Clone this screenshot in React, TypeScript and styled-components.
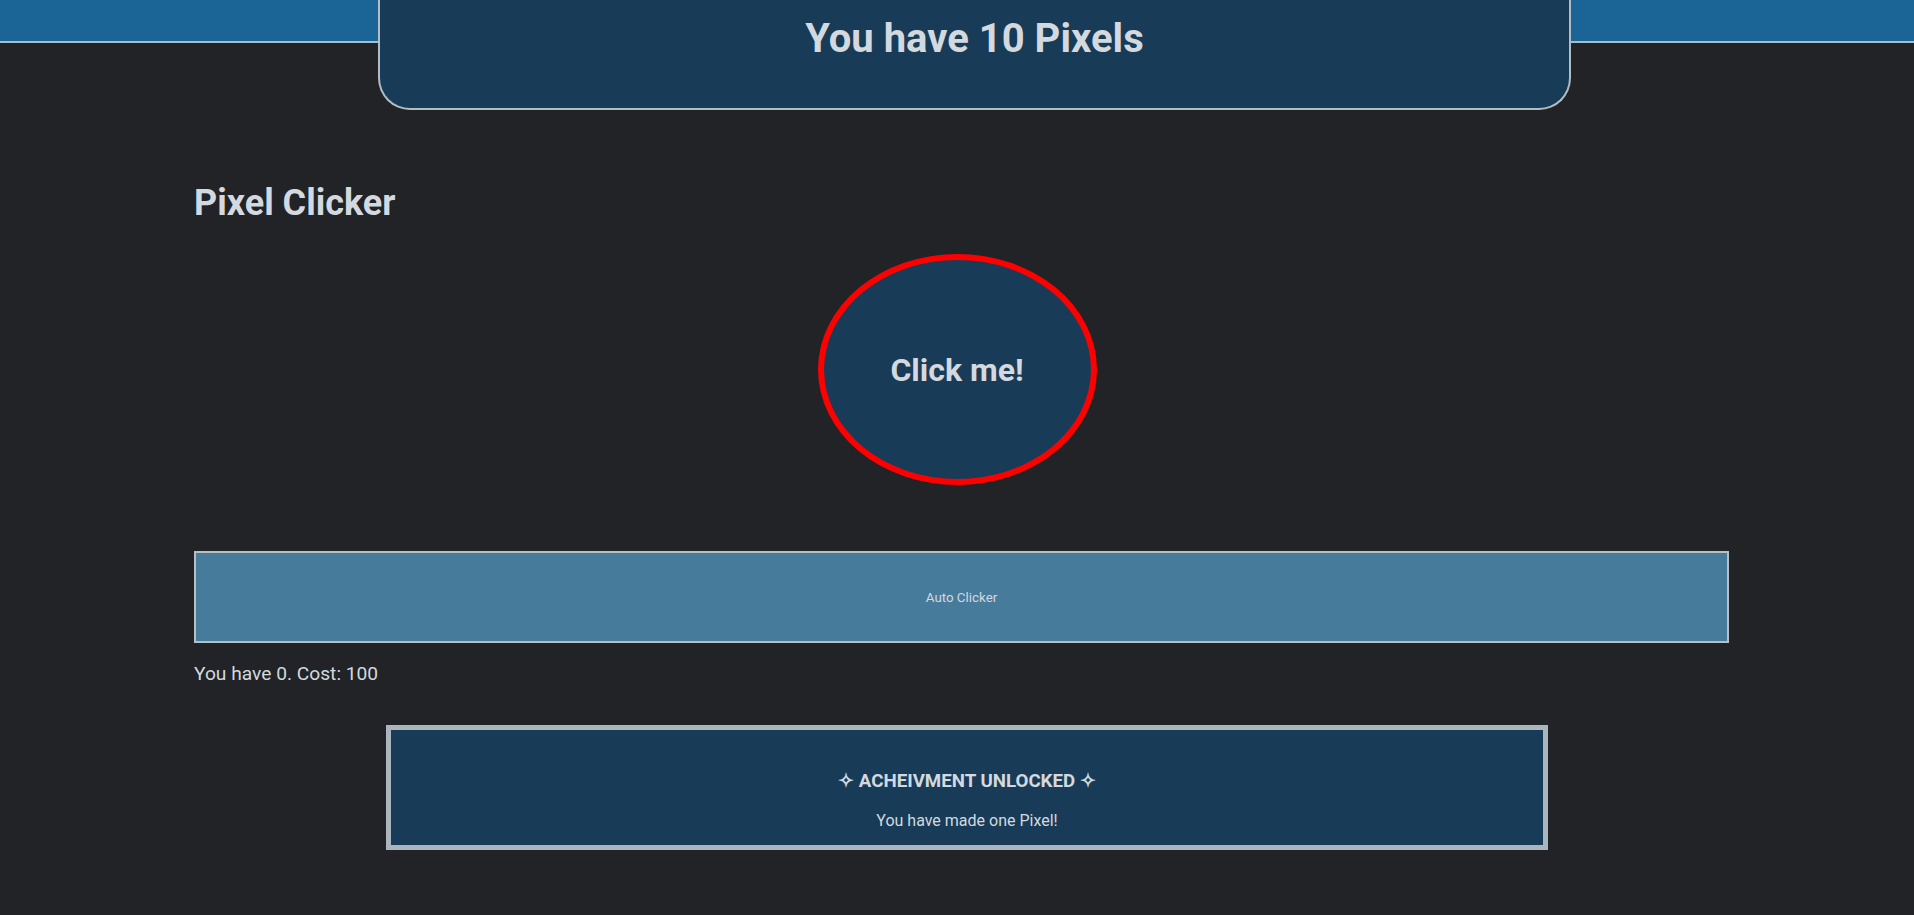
import React from "react";
import styled, { createGlobalStyle } from "styled-components";

const GlobalStyle = createGlobalStyle`
  html, body {
    margin: 0;
    padding: 0;
    background: #212327;
    color: #d3d9df;
    font-family: Roboto, "Liberation Sans", sans-serif;
  }
`;

const Header = styled.header`
  height: 110px;
  display: flex;
  align-items: flex-start;
  padding-left: 378px;
  background: linear-gradient(
    to bottom,
    #1a6595 0px,
    #1a6595 41px,
    #a9bccb 41px,
    #a9bccb 43px,
    #212327 43px
  );
`;

const CounterPanel = styled.div`
  box-sizing: border-box;
  width: 1193px;
  height: 110px;
  padding-top: 15px;
  background: #183c58;
  border: 2px solid #b2bcc4;
  border-top: none;
  border-radius: 0 0 32px 32px;
  text-align: center;
`;

const CounterText = styled.h2`
  margin: 0;
  font-size: 40px;
  line-height: 47px;
  font-weight: 700;
  color: #d3d9df;
`;

const Main = styled.main`
  width: 1535px;
  margin-left: 194px;
  display: flex;
  flex-direction: column;
`;

const Title = styled.h1`
  margin: 72px 0 0;
  font-size: 36px;
  line-height: 42px;
  font-weight: 700;
  color: #d3d9df;
`;

const ClickButton = styled.button`
  box-sizing: border-box;
  align-self: center;
  margin: 30px 9px 0 0;
  width: 279px;
  height: 231px;
  border-radius: 50%;
  border: 6px solid #ff0000;
  background: #183c58;
  color: #d3d9df;
  font-family: Roboto, "Liberation Sans", sans-serif;
  font-size: 32px;
  font-weight: 700;
  display: flex;
  align-items: center;
  justify-content: center;
  padding: 0;
  cursor: pointer;
`;

const UpgradeButton = styled.button`
  box-sizing: border-box;
  margin-top: 66px;
  width: 100%;
  height: 92px;
  border: 2px solid #b6bec6;
  background: #467b9c;
  color: #d3d9df;
  font-family: Roboto, "Liberation Sans", sans-serif;
  font-size: 13.333px;
  cursor: pointer;
`;

const UpgradeInfo = styled.p`
  margin: 20px 0 0;
  font-size: 19.2px;
  line-height: 22px;
  color: #d3d9df;
`;

const AchievementCard = styled.section`
  box-sizing: border-box;
  margin: 40px 0 40px 192px;
  width: 1162px;
  height: 125px;
  border: 5px solid #abb5bd;
  background: #183c58;
  padding-top: 40px;
  text-align: center;
`;

const AchievementTitle = styled.h3`
  margin: 0;
  font-size: 18.72px;
  line-height: 22px;
  font-weight: 700;
  color: #d3d9df;
`;

const AchievementText = styled.p`
  margin: 19px 0 0;
  font-size: 16px;
  line-height: 19px;
  color: #d3d9df;
`;

export default function App() {
  return (
    <>
      <GlobalStyle />
      <Header>
        <CounterPanel>
          <CounterText>You have 10 Pixels</CounterText>
        </CounterPanel>
      </Header>
      <Main>
        <Title>Pixel Clicker</Title>
        <ClickButton>Click me!</ClickButton>
        <UpgradeButton>Auto Clicker</UpgradeButton>
        <UpgradeInfo>You have 0. Cost: 100</UpgradeInfo>
        <AchievementCard>
          <AchievementTitle>✧ ACHEIVMENT UNLOCKED ✧</AchievementTitle>
          <AchievementText>You have made one Pixel!</AchievementText>
        </AchievementCard>
      </Main>
    </>
  );
}
